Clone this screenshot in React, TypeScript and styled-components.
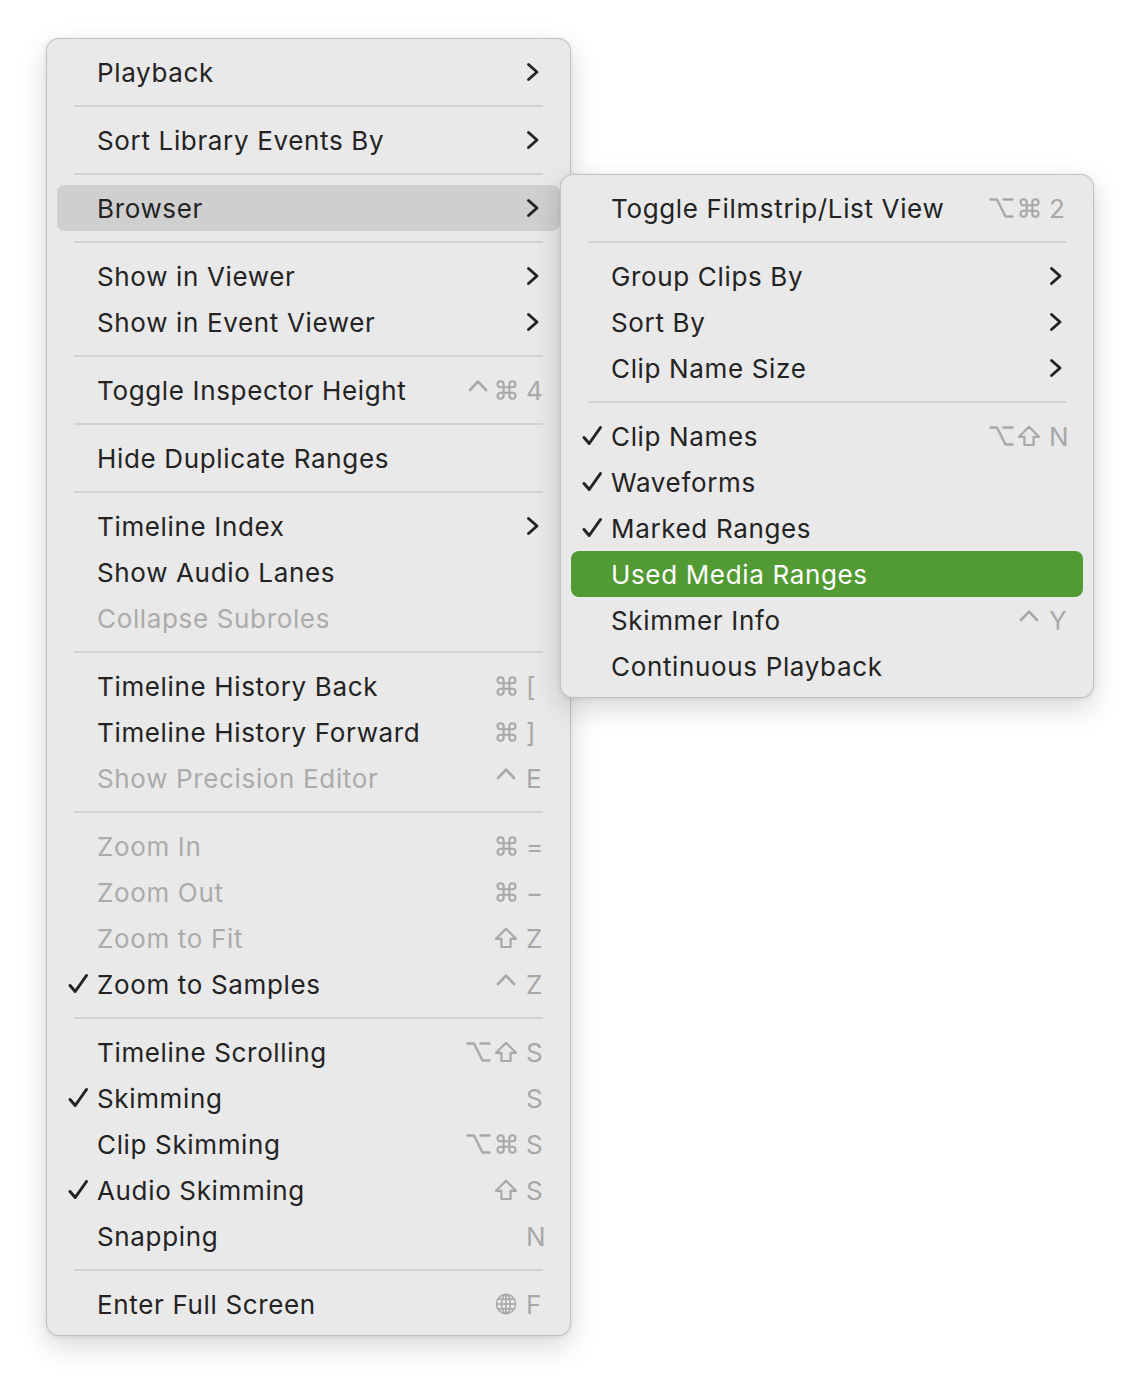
import React from 'react';
import styled, { createGlobalStyle } from 'styled-components';

const GlobalStyle = createGlobalStyle`
  html, body {
    margin: 0;
    padding: 0;
    background: #ffffff;
  }
  body {
    font-family: Inter, "Noto Sans", "Liberation Sans", sans-serif;
    -webkit-font-smoothing: antialiased;
  }
`;

const Stage = styled.div`
  padding: 38px 0 0 46px;
  height: 1390px;
  box-sizing: border-box;
`;

const MenuPanel = styled.div<{ $width: number }>`
  position: relative;
  width: ${p => p.$width}px;
  box-sizing: border-box;
  padding: 10px 10px 8px;
  background: #e9e9e9;
  border: 1px solid rgba(0, 0, 0, 0.17);
  border-radius: 13px;
  box-shadow: 0 10px 28px rgba(0, 0, 0, 0.16), 0 1px 4px rgba(0, 0, 0, 0.08);
`;

const SubPanel = styled(MenuPanel)`
  position: absolute;
  left: 100%;
  top: -11px;
  z-index: 5;
`;

const Row = styled.div<{ $tone: 'none' | 'gray' | 'green' }>`
  position: relative;
  display: flex;
  align-items: center;
  height: 46px;
  padding-right: 16px;
  border-radius: 8px;
  background: ${p => (p.$tone === 'gray' ? '#cfcfcf' : p.$tone === 'green' ? '#529a33' : 'transparent')};
`;

const CheckCol = styled.div`
  width: 40px;
  flex-shrink: 0;
  padding-left: 10px;
  box-sizing: border-box;
  display: flex;
  align-items: center;
`;

const Label = styled.div<{ $state: 'normal' | 'disabled' | 'active' }>`
  flex: 1;
  font-size: 26px;
  letter-spacing: 0.65px;
  white-space: nowrap;
  color: ${p => (p.$state === 'disabled' ? '#ababab' : p.$state === 'active' ? '#ffffff' : '#232323')};
`;

const Mods = styled.div`
  display: flex;
  margin-right: 6px;
`;

const ModSlot = styled.span`
  width: 28px;
  height: 46px;
  display: flex;
  align-items: center;
  justify-content: center;
`;

const Trail = styled.div`
  width: 18px;
  flex-shrink: 0;
  display: flex;
  align-items: center;
`;

const KeyChar = styled.span`
  font-size: 26px;
  color: #a8a8a8;
`;

const Separator = styled.div`
  height: 2px;
  margin: 10px 17px;
  background: #d3d3d3;
`;

type Mod = 'ctrl' | 'cmd' | 'opt' | 'shift' | 'globe';

type Entry =
  | { sep: true }
  | {
      sep?: false;
      label: string;
      check?: boolean;
      disabled?: boolean;
      sub?: boolean;
      mods?: Mod[];
      keyChar?: string;
      tone?: 'gray' | 'green';
      submenu?: boolean;
    };

const S: Entry = { sep: true };

const browserItems: Entry[] = [
  { label: 'Toggle Filmstrip/List View', mods: ['opt', 'cmd'], keyChar: '2' },
  S,
  { label: 'Group Clips By', sub: true },
  { label: 'Sort By', sub: true },
  { label: 'Clip Name Size', sub: true },
  S,
  { label: 'Clip Names', check: true, mods: ['opt', 'shift'], keyChar: 'N' },
  { label: 'Waveforms', check: true },
  { label: 'Marked Ranges', check: true },
  { label: 'Used Media Ranges', tone: 'green' },
  { label: 'Skimmer Info', mods: ['ctrl'], keyChar: 'Y' },
  { label: 'Continuous Playback' },
];

const viewItems: Entry[] = [
  { label: 'Playback', sub: true },
  S,
  { label: 'Sort Library Events By', sub: true },
  S,
  { label: 'Browser', sub: true, tone: 'gray', submenu: true },
  S,
  { label: 'Show in Viewer', sub: true },
  { label: 'Show in Event Viewer', sub: true },
  S,
  { label: 'Toggle Inspector Height', mods: ['ctrl', 'cmd'], keyChar: '4' },
  S,
  { label: 'Hide Duplicate Ranges' },
  S,
  { label: 'Timeline Index', sub: true },
  { label: 'Show Audio Lanes' },
  { label: 'Collapse Subroles', disabled: true },
  S,
  { label: 'Timeline History Back', mods: ['cmd'], keyChar: '[' },
  { label: 'Timeline History Forward', mods: ['cmd'], keyChar: ']' },
  { label: 'Show Precision Editor', disabled: true, mods: ['ctrl'], keyChar: 'E' },
  S,
  { label: 'Zoom In', disabled: true, mods: ['cmd'], keyChar: '=' },
  { label: 'Zoom Out', disabled: true, mods: ['cmd'], keyChar: '−' },
  { label: 'Zoom to Fit', disabled: true, mods: ['shift'], keyChar: 'Z' },
  { label: 'Zoom to Samples', check: true, mods: ['ctrl'], keyChar: 'Z' },
  S,
  { label: 'Timeline Scrolling', mods: ['opt', 'shift'], keyChar: 'S' },
  { label: 'Skimming', check: true, keyChar: 'S' },
  { label: 'Clip Skimming', mods: ['opt', 'cmd'], keyChar: 'S' },
  { label: 'Audio Skimming', check: true, mods: ['shift'], keyChar: 'S' },
  { label: 'Snapping', keyChar: 'N' },
  S,
  { label: 'Enter Full Screen', mods: ['globe'], keyChar: 'F' },
];

const GRAY = '#a8a8a8';

const Check = ({ color }: { color: string }) => (
  <svg width="22" height="22" viewBox="0 0 22 22">
    <path d="M3 12.5 L8.2 18.5 L19.5 2.5" fill="none" stroke={color} strokeWidth="3" strokeLinecap="round" strokeLinejoin="round" />
  </svg>
);

const Chevron = ({ color }: { color: string }) => (
  <svg width="14" height="20" viewBox="0 0 14 20">
    <path d="M2.5 2.5 L11 10 L2.5 17.5" fill="none" stroke={color} strokeWidth="2.9" strokeLinecap="round" strokeLinejoin="round" />
  </svg>
);

const ModIcon = ({ kind }: { kind: Mod }) => {
  const common = { fill: 'none', stroke: GRAY, strokeLinecap: 'round' as const, strokeLinejoin: 'round' as const };
  switch (kind) {
    case 'ctrl':
      return (
        <svg width="22" height="22" viewBox="0 0 22 22">
          <path d="M3 11 L11 2.6 L19 11" strokeWidth="2.6" {...common} />
        </svg>
      );
    case 'cmd':
      return (
        <svg width="23" height="22" viewBox="0 0 24 23">
          <path
            d="M15 5.5v12a3.2 3.2 0 1 0 3.2-3.2H5.8a3.2 3.2 0 1 0 3.2 3.2v-12a3.2 3.2 0 1 0-3.2 3.2h12.4a3.2 3.2 0 1 0-3.2-3.2"
            strokeWidth="2.2"
            {...common}
          />
        </svg>
      );
    case 'opt':
      return (
        <svg width="25" height="22" viewBox="0 0 25 22">
          <path d="M1.5 2.5 H8 L16.5 19.5 H23.5 M14.5 2.5 H23.5" strokeWidth="2.4" {...common} />
        </svg>
      );
    case 'shift':
      return (
        <svg width="24" height="22" viewBox="0 0 24 22">
          <path d="M12 1.8 L22 11.8 H16.6 V20 H7.4 V11.8 H2 Z" strokeWidth="2.2" {...common} />
        </svg>
      );
    case 'globe':
      return (
        <svg width="22" height="22" viewBox="0 0 22 22">
          <g fill="none" stroke={GRAY} strokeWidth="1.6">
            <circle cx="11" cy="11" r="9.6" />
            <ellipse cx="11" cy="11" rx="4.4" ry="9.6" />
            <line x1="11" y1="1.4" x2="11" y2="20.6" />
            <line x1="1.4" y1="11" x2="20.6" y2="11" />
            <line x1="3" y1="6.2" x2="19" y2="6.2" />
            <line x1="3" y1="15.8" x2="19" y2="15.8" />
          </g>
        </svg>
      );
  }
};

const MenuList = ({ items, width, sub }: { items: Entry[]; width: number; sub?: boolean }) => {
  const Panel = sub ? SubPanel : MenuPanel;
  return (
    <Panel $width={width}>
      {items.map((it, i) => {
        if (it.sep) return <Separator key={i} />;
        const active = it.tone === 'green';
        const fg = active ? '#ffffff' : '#232323';
        return (
          <Row key={i} $tone={it.tone || 'none'}>
            <CheckCol>{it.check && <Check color={fg} />}</CheckCol>
            <Label $state={it.disabled ? 'disabled' : active ? 'active' : 'normal'}>{it.label}</Label>
            {it.mods && (
              <Mods>
                {it.mods.map((m, j) => (
                  <ModSlot key={j}>
                    <ModIcon kind={m} />
                  </ModSlot>
                ))}
              </Mods>
            )}
            <Trail>
              {it.sub && <Chevron color={fg} />}
              {it.keyChar && <KeyChar>{it.keyChar}</KeyChar>}
            </Trail>
            {it.submenu && <MenuList items={browserItems} width={534} sub />}
          </Row>
        );
      })}
    </Panel>
  );
};

export default function App() {
  return (
    <>
      <GlobalStyle />
      <Stage>
        <MenuList items={viewItems} width={525} />
      </Stage>
    </>
  );
}
